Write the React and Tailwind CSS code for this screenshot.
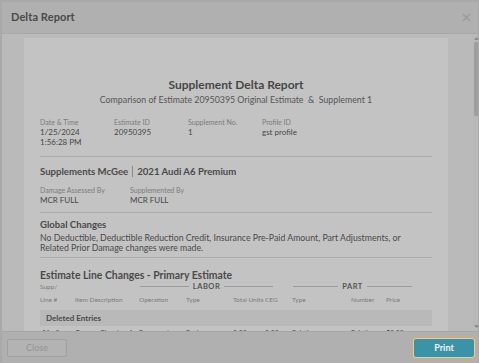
import React from "react";

const Label = ({ children }) => (
  <div className="text-[7px] leading-[9px] text-[#7b7b7b]">{children}</div>
);
const Val = ({ children }) => (
  <div className="text-[8px] leading-[10px] text-[#474747]">{children}</div>
);

export default function App() {
  return (
    <div className="w-[479px] h-[363px] flex flex-col bg-[#b0b0b0] border-t-2 border-l-2 border-r border-[#a9a9a9] overflow-hidden font-[Lato,sans-serif]">
      {/* header */}
      <div className="h-[32px] shrink-0 flex items-center justify-between pl-[9px] pr-[6px] border-b border-[#a8a8a8]">
        <div className="text-[11px] font-bold text-[#4a4a4a] tracking-[0.1px]">Delta Report</div>
        <svg width="9" height="9" viewBox="0 0 9 9" className="mr-[1px]">
          <path d="M1 1 L8 8 M8 1 L1 8" stroke="#9a9a9a" strokeWidth="1.4" />
        </svg>
      </div>

      {/* body */}
      <div className="flex-1 min-h-0 flex bg-[#bababa]">
        <div className="w-[22px] shrink-0" />
        <div className="w-[424px] shrink-0 mt-[4px] bg-[#c3c3c3] overflow-hidden px-[16px] pt-[39px]">
          <div className="text-center text-[12px] leading-[15px] font-bold text-[#474747]">Supplement Delta Report</div>
          <div className="text-center text-[8.8px] leading-[11px] mt-[2px] text-[#555]">
            Comparison of Estimate 20950395 Original Estimate&nbsp; &amp;&nbsp; Supplement 1
          </div>

          <div className="grid grid-cols-[74px_74px_74px_1fr] mt-[12.5px]">
            <div>
              <Label>Date &amp; Time</Label>
              <Val>1/25/2024</Val>
              <Val>1:56:28 PM</Val>
            </div>
            <div>
              <Label>Estimate ID</Label>
              <Val>20950395</Val>
            </div>
            <div>
              <Label>Supplement No.</Label>
              <Val>1</Val>
            </div>
            <div>
              <Label>Profile ID</Label>
              <Val>gst profile</Val>
            </div>
          </div>

          <div className="h-px bg-[#acacac] mt-[9px]" />

          <div className="flex items-center mt-[8px] text-[9.6px] leading-[13px] font-bold text-[#4a4a4a]">
            <span>Supplements McGee</span>
            <span className="w-px h-[11px] bg-[#8a8a8a] mx-[4px]" />
            <span>2021 Audi A6 Premium</span>
          </div>

          <div className="grid grid-cols-[90px_1fr] mt-[8.5px]">
            <div>
              <Label>Damage Assessed By</Label>
              <Val>MCR FULL</Val>
            </div>
            <div>
              <Label>Supplemented By</Label>
              <Val>MCR FULL</Val>
            </div>
          </div>

          <div className="h-px bg-[#acacac] mt-[7px]" />

          <div className="mt-[4.5px] text-[9.6px] leading-[13px] font-bold text-[#4a4a4a]">Global Changes</div>
          <div className="mt-[2px] text-[8.75px] leading-[10.5px] text-[#4a4a4a]">
            No Deductible, Deductible Reduction Credit, Insurance Pre-Paid Amount, Part Adjustments, or
            <br />
            Related Prior Damage changes were made.
          </div>

          <div className="h-px bg-[#acacac] mt-[3px]" />

          <div className="mt-[10px] text-[10.4px] leading-[14px] font-bold text-[#4a4a4a]">
            Estimate Line Changes - Primary Estimate
          </div>

          <div className="flex items-center h-[10px] text-[6.5px] text-[#7b7b7b]">
            <div className="w-[100px]">Supp/</div>
            <div className="w-[133px] flex items-center">
              <div className="flex-1 h-px bg-[#9c9c9c]" />
              <div className="px-[4px] text-[7.5px] font-bold tracking-[0.5px] text-[#555]">LABOR</div>
              <div className="flex-1 h-px bg-[#9c9c9c]" />
            </div>
            <div className="w-[20px]" />
            <div className="w-[119px] flex items-center">
              <div className="flex-1 h-px bg-[#9c9c9c]" />
              <div className="px-[4px] text-[7.5px] font-bold tracking-[0.5px] text-[#555]">PART</div>
              <div className="flex-1 h-px bg-[#9c9c9c]" />
            </div>
          </div>

          <div className="grid grid-cols-[35px_64px_47px_47px_32px_27px_59px_35px_1fr] mt-[3px] text-[6.5px] leading-[10px] text-[#7b7b7b]">
            <div>Line #</div>
            <div>Item Description</div>
            <div>Operation</div>
            <div>Type</div>
            <div>Total Units</div>
            <div>CEG</div>
            <div>Type</div>
            <div>Number</div>
            <div>Price</div>
          </div>

          <div className="mt-[5px] h-[16px] bg-[#b9b9b9] flex items-center pl-[6px] text-[8px] font-bold text-[#4a4a4a]">
            Deleted Entries
          </div>

          <div className="grid grid-cols-[35px_64px_47px_47px_32px_27px_59px_35px_1fr] mt-[2px] text-[7px] leading-[10px] text-[#4a4a4a]">
            <div className="pl-[2px]">01&nbsp;&nbsp; 0</div>
            <div className="whitespace-nowrap overflow-hidden pr-[4px]">Cowver Plancher Au</div>
            <div>Remove /</div>
            <div>Body</div>
            <div>0.00</div>
            <div>0.00</div>
            <div>Existing</div>
            <div>Existing</div>
            <div>$0.00</div>
          </div>
        </div>
        <div className="w-[25px] shrink-0" />
        <div className="w-[6px] shrink-0 flex flex-col items-center bg-[#b8b8b8] pt-[3px] pb-[3px]">
          <svg width="5" height="3" viewBox="0 0 5 3">
            <path d="M0 3 L2.5 0 L5 3 Z" fill="#8a8a8a" />
          </svg>
          <div className="mt-[2px] w-[5px] h-[74px] bg-[#9f9f9f] rounded-[1px]" />
          <div className="flex-1" />
          <svg width="5" height="3" viewBox="0 0 5 3">
            <path d="M0 0 L5 0 L2.5 3 Z" fill="#8a8a8a" />
          </svg>
        </div>
      </div>

      {/* footer */}
      <div className="h-[32px] shrink-0 border-t border-[#a6a6a6] flex items-center justify-between pl-[5px] pr-[2px]">
        <button className="w-[60px] h-[18px] border border-[#a0a0a0] rounded-[2px] bg-[#b3b3b3] text-[9px] text-[#949494]">
          Close
        </button>
        <div className="p-[1px] border-[1.5px] border-[#e4a84c] rounded-[4px] bg-[#cfcfcf]">
          <button className="w-[60px] h-[18px] rounded-[2px] bg-[#3b93a7] text-[9px] font-bold text-[#f2f2f2] block">
            Print
          </button>
        </div>
      </div>
    </div>
  );
}
